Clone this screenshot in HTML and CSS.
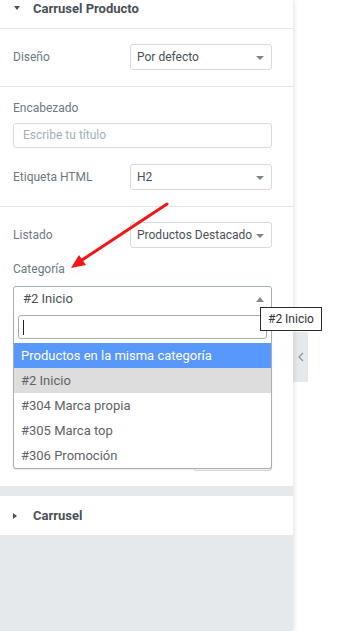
FILE: index.html
```html
<!DOCTYPE html>
<html lang="es">
<head>
  <meta charset="UTF-8">
  <title>Carrusel Producto</title>
  <meta name="viewport" content="width=device-width,initial-scale=1">
  <link rel="stylesheet" href="styles.css">
</head>
<body>
<div class="page">
  <aside class="panel">
    <section class="section">
      <div class="section-head head-open"><span class="caret caret-down"></span>Carrusel Producto</div>

      <div class="control sep">
        <div class="row">
          <label class="label">Diseño</label>
          <div class="select">Por defecto<span class="arrow"></span></div>
        </div>
      </div>

      <div class="control sep">
        <label class="label label-block first">Encabezado</label>
        <div class="text-input placeholder">Escribe tu título</div>
        <div class="row row-gap">
          <label class="label">Etiqueta HTML</label>
          <div class="select">H2<span class="arrow"></span></div>
        </div>
      </div>

      <div class="control last">
        <div class="row">
          <label class="label">Listado</label>
          <div class="select">Productos Destacado<span class="arrow"></span></div>
        </div>
        <label class="label label-block">Categoría</label>
        <div class="combo">
          <div class="combo-box">#2 Inicio<span class="arrow arrow-up"></span></div>
          <div class="dropdown">
            <div class="search"><span class="cursor"></span></div>
            <ul class="options">
              <li class="opt active">Productos en la misma categoría</li>
              <li class="opt selected">#2 Inicio</li>
              <li class="opt">#304 Marca propia</li>
              <li class="opt">#305 Marca top</li>
              <li class="opt">#306 Promoción</li>
            </ul>
          </div>
        </div>
        <div class="row hidden-row"><div class="small-input"></div></div>
      </div>
    </section>

    <section class="section closed">
      <div class="section-head"><span class="caret caret-right"></span>Carrusel</div>
    </section>
  </aside>
  <div class="canvas"></div>
</div>

<div class="tooltip">#2 Inicio</div>

<div class="collapse">
  <svg width="6" height="10" viewBox="0 0 6 10"><polyline points="5,1 1,5 5,9" fill="none" stroke="#8a939b" stroke-width="1.2"/></svg>
</div>

<svg class="note-arrow" width="348" height="631" viewBox="0 0 348 631">
  <line x1="167" y1="204" x2="82" y2="260" stroke="#f21616" stroke-width="3" stroke-linecap="round"/>
  <polygon points="71,268 86,265 79,255" fill="#f21616"/>
</svg>
</body>
</html>
```

FILE: styles.css
```css
body {
  margin: 0;
  font-family: Roboto, "Liberation Sans", Arial, sans-serif;
  background: #fff;
  color: #495157;
  overflow: hidden;
}
.page {
  display: flex;
  height: 631px;
}
.panel {
  width: 293px;
  flex: none;
  background: #e6e9ec;
  box-shadow: 1px 0 5px rgba(0,0,0,.12);
  position: relative;
  z-index: 1;
}
.canvas {
  flex: 1;
  background: #fff;
}
.section {
  background: #fff;
}
.section.closed {
  margin-top: 10px;
}
.section-head {
  display: flex;
  align-items: center;
  height: 39px;
  padding-left: 13px;
  font-size: 13px;
  font-weight: 700;
  color: #495157;
}
.head-open {
  height: 16px;
  padding-bottom: 12px;
  border-bottom: 1px solid #e6e9ec;
}
.caret {
  width: 0;
  height: 0;
}
.caret-down {
  border-left: 3.5px solid transparent;
  border-right: 3.5px solid transparent;
  border-top: 4px solid #495157;
  margin-left: 1px;
  margin-right: 13px;
}
.caret-right {
  border-top: 3.5px solid transparent;
  border-bottom: 3.5px solid transparent;
  border-left: 4px solid #495157;
  margin-right: 16px;
}
.control {
  padding: 15px 21px 16px 13px;
}
.control.sep {
  border-bottom: 1px solid #e6e9ec;
}
.control.last {
  padding-bottom: 15px;
}
.row {
  display: flex;
  align-items: center;
}
.row-gap {
  margin-top: 16px;
}
.label {
  display: block;
  font-size: 12px;
  line-height: 14px;
  color: #6d7882;
  width: 117px;
  flex: none;
}
.label-block {
  width: auto;
  margin-top: 14px;
}
.label-block.first {
  margin-top: -1px;
}
.select {
  position: relative;
  flex: 1;
  height: 24px;
  border: 1px solid #d5dadf;
  border-radius: 3px;
  font-size: 12px;
  line-height: 24px;
  padding-left: 6px;
  color: #495157;
  white-space: nowrap;
  overflow: hidden;
}
.arrow {
  position: absolute;
  right: 7px;
  top: 11px;
  width: 0;
  height: 0;
  border-left: 4px solid transparent;
  border-right: 4px solid transparent;
  border-top: 4px solid #7d858c;
}
.text-input {
  margin-top: 8px;
  height: 23px;
  border: 1px solid #d5dadf;
  border-radius: 3px;
  font-size: 12px;
  line-height: 23px;
  padding-left: 9px;
}
.placeholder {
  color: #a4afb7;
}
.combo {
  position: relative;
  margin-top: 10px;
  z-index: 2;
}
.combo-box {
  position: relative;
  height: 24px;
  border: 1px solid #a4afb7;
  border-radius: 3px 3px 0 0;
  font-size: 13px;
  line-height: 24px;
  padding-left: 9px;
  color: #495157;
  background: #fff;
}
.arrow-up {
  top: 10px;
  border-top: none;
  border-bottom: 5px solid #8a8a8a;
}
.dropdown {
  position: absolute;
  left: 0;
  right: 0;
  top: 25px;
  background: #fff;
  border: 1px solid #a4afb7;
  border-top: none;
  border-radius: 0 0 3px 3px;
  box-shadow: 0 1px 2px rgba(0,0,0,.08);
}
.search {
  margin: 4px 4px;
  height: 22px;
  border: 1px solid #aaa;
  border-radius: 3px;
  display: flex;
  align-items: center;
  padding-left: 4px;
}
.cursor {
  width: 1px;
  height: 15px;
  background: #222;
}
.options {
  list-style: none;
  margin: 0;
  padding: 0;
}
.opt {
  height: 25px;
  line-height: 25px;
  padding-left: 7px;
  font-size: 13px;
  color: #5f6368;
}
.opt.active {
  background: #5897fb;
  color: #fff;
}
.opt.selected {
  background: #ddd;
}
.hidden-row {
  margin-top: 133px;
  justify-content: flex-end;
}
.small-input {
  width: 77px;
  height: 24px;
  border: 1px solid #d5dadf;
  border-radius: 3px;
}
.tooltip {
  position: absolute;
  left: 260px;
  top: 307px;
  height: 22px;
  padding: 0 7px;
  border: 1px solid #2b2b2b;
  background: #fff;
  font-size: 12px;
  line-height: 22px;
  color: #333;
  z-index: 5;
}
.collapse {
  position: absolute;
  left: 293px;
  top: 332px;
  width: 15px;
  height: 50px;
  background: #e6e9ec;
  display: flex;
  align-items: center;
  justify-content: center;
  z-index: 0;
}
.note-arrow {
  position: absolute;
  left: 0;
  top: 0;
  pointer-events: none;
  z-index: 6;
}
```
